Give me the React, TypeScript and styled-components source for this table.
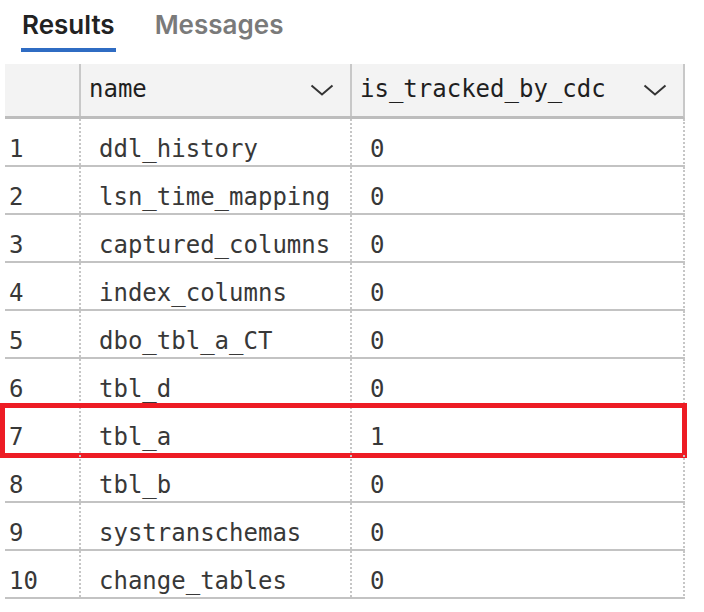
import React from "react";
import styled, { createGlobalStyle } from "styled-components";

const GlobalStyle = createGlobalStyle`
  html, body { margin: 0; padding: 0; background: #ffffff; }
  body { font-family: "Inter", "Liberation Sans", sans-serif; }
`;

const Page = styled.div`
  width: 704px;
  height: 612px;
  background: #fff;
  overflow: hidden;
`;

const TabBar = styled.div`
  display: flex;
  gap: 38px;
  padding-left: 21px;
`;

const Tab = styled.div<{ $active?: boolean }>`
  font-family: "Inter", "Liberation Sans", sans-serif;
  font-size: 26px;
  font-weight: 600;
  line-height: 30px;
  padding: 10px 1px 8px 1px;
  color: ${(p) => (p.$active ? "#222222" : "#7a7a7a")};
  border-bottom: 4px solid ${(p) => (p.$active ? "#2f6cc3" : "transparent")};
`;

const Table = styled.div`
  margin: 12px 0 0 5px;
  width: 680px;
  font-family: "DejaVu Sans Mono", "Liberation Mono", monospace;
  font-size: 24px;
`;

const HeaderRow = styled.div`
  display: grid;
  grid-template-columns: 74px 271px 333px;
  height: 52px;
  background: #f3f3f3;
  border-bottom: 3px solid #bdbdbd;
  border-right: 2px solid #c8c8c8;
`;

const HeaderCell = styled.div<{ $sep?: boolean }>`
  display: flex;
  align-items: flex-start;
  justify-content: space-between;
  padding: 11px 16px 0 8px;
  line-height: 28px;
  color: #1f1f1f;
  border-left: ${(p) => (p.$sep ? "2px solid #c8c8c8" : "none")};
`;

const Chevron = styled.svg`
  width: 24px;
  height: 12px;
  margin-top: 9px;
  flex: none;
`;

const Row = styled.div`
  position: relative;
  display: grid;
  grid-template-columns: 74px 271px 333px;
  height: 46px;
  border-bottom: 2px solid #c3c3c3;
  border-right: 2px dotted #c6c6c6;
`;

const Cell = styled.div<{ $index?: boolean }>`
  padding: 16px 0 0 ${(p) => (p.$index ? "4px" : "18px")};
  line-height: 28px;
  color: #383838;
  border-left: ${(p) => (p.$index ? "none" : "2px dotted #c6c6c6")};
  white-space: nowrap;
`;

const Highlight = styled.div`
  position: absolute;
  top: -4px;
  left: -5px;
  right: -4px;
  bottom: -5px;
  border: 5px solid #ed1c24;
  pointer-events: none;
`;

const rows: [string, number][] = [
  ["ddl_history", 0],
  ["lsn_time_mapping", 0],
  ["captured_columns", 0],
  ["index_columns", 0],
  ["dbo_tbl_a_CT", 0],
  ["tbl_d", 0],
  ["tbl_a", 1],
  ["tbl_b", 0],
  ["systranschemas", 0],
  ["change_tables", 0],
];

const ChevronIcon = () => (
  <Chevron viewBox="0 0 24 12">
    <polyline points="1.5,1.5 12,10.5 22.5,1.5" fill="none" stroke="#333" strokeWidth="2" />
  </Chevron>
);

export default function App() {
  return (
    <Page>
      <GlobalStyle />
      <TabBar>
        <Tab $active>Results</Tab>
        <Tab>Messages</Tab>
      </TabBar>
      <Table>
        <HeaderRow>
          <HeaderCell />
          <HeaderCell $sep>
            <span>name</span>
            <ChevronIcon />
          </HeaderCell>
          <HeaderCell $sep>
            <span>is_tracked_by_cdc</span>
            <ChevronIcon />
          </HeaderCell>
        </HeaderRow>
        {rows.map(([name, v], i) => (
          <Row key={name}>
            <Cell $index>{i + 1}</Cell>
            <Cell>{name}</Cell>
            <Cell>{v}</Cell>
            {v === 1 && <Highlight />}
          </Row>
        ))}
      </Table>
    </Page>
  );
}
